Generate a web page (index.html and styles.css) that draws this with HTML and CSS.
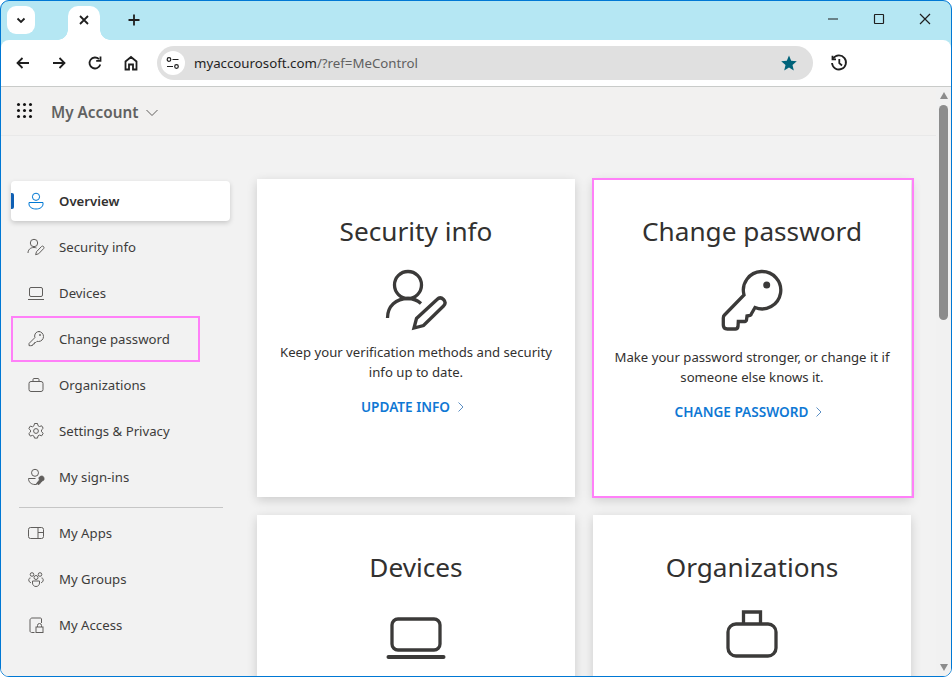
FILE: index.html
```html
<!DOCTYPE html>
<html lang="en">
<head>
<meta charset="utf-8">
<title>My Account</title>
<link rel="stylesheet" href="styles.css">
</head>
<body>
<div class="window">
  <div class="tabstrip">
    <button class="tab-search"><svg width="12" height="12" viewBox="0 0 12 12"><path d="M2.500 4.500 6 8l3.500-3.500" class="s2"/></svg></button>
    <div class="tab"><svg width="12" height="12" viewBox="0 0 12 12"><path d="M2 2l8 8M10 2l-8 8" class="s2"/></svg></div>
    <div class="newtab"><svg width="14" height="14" viewBox="0 0 14 14"><path d="M7 1.500v11M1.500 7h11" class="s2"/></svg></div>
    <div class="wincontrols">
      <svg width="12" height="12" viewBox="0 0 12 12"><path d="M1 6h10" class="s1"/></svg>
      <svg width="12" height="12" viewBox="0 0 12 12"><rect x="1.500" y="1.500" width="9" height="9" rx="0.500" class="s1"/></svg>
      <svg width="12" height="12" viewBox="0 0 12 12"><path d="M1 1l10 10M11 1 1 11" class="s1"/></svg>
    </div>
  </div>
  <div class="toolbar">
    <svg class="navicon" width="16" height="16" viewBox="0 0 16 16"><path d="M14 8H2.500M7.500 3 2.500 8l5 5" class="s2"/></svg>
    <svg class="navicon" width="16" height="16" viewBox="0 0 16 16"><path d="M2 8h11.500M8.500 3l5 5-5 5" class="s2"/></svg>
    <svg class="navicon" width="16" height="16" viewBox="0 0 16 16"><path d="M13.300 9.500A5.500 5.500 0 1 1 12 4.200" class="s2"/><path d="M13.500 1.500v4.300H9.200" class="s2"/></svg>
    <svg class="navicon" width="16" height="16" viewBox="0 0 16 16"><path d="M2.500 14.500V6.500L8 2l5.500 4.500v8h-3.500V9.500H6v5z" class="s2"/></svg>
    <div class="omnibox">
      <span class="siteinfo"><svg width="14" height="14" viewBox="0 0 14 14"><circle cx="3" cy="3.500" r="1.800" class="s1"/><path d="M6.500 3.500h6M1 10.500h6" class="s1"/><circle cx="10.500" cy="10.500" r="1.800" class="s1"/></svg></span>
      <span class="url"><span class="host">myaccourosoft.com</span>/?ref=MeControl</span>
      <svg class="star" width="18" height="18" viewBox="0 0 18 18"><path d="M9 1.500l2.200 5.200 5.600.5-4.300 3.700 1.300 5.500L9 13.600l-4.800 2.900 1.300-5.500L1.200 7.200l5.600-.5z" fill="#00637a"/></svg>
    </div>
    <svg class="history" width="18" height="18" viewBox="0 0 18 18"><path d="M3.200 4.500A7 7 0 1 1 2 9" class="s2"/><path d="M2.500 1.800v3.500H6M9.300 5v4.200l2.700 2.300" class="s2"/></svg>
  </div>
  <div class="viewport">
    <div class="page">
      <header class="topbar">
        <div class="waffle"><i></i><i></i><i></i><i></i><i></i><i></i><i></i><i></i><i></i></div>
        <span class="brand">My Account</span>
        <svg class="brandchev" width="14" height="8" viewBox="0 0 14 8"><path d="M1.500 1 7 6.500 12.500 1" class="s1 grey"/></svg>
      </header>
      <div class="content">
        <nav class="sidebar">
          <a class="navitem active"><span class="navico"><svg width="18" height="18" viewBox="0 0 18 18"><circle cx="9" cy="4.800" r="3.600"/><path d="M2 10.500h14v1.500c0 3-3 5-7 5s-7-2-7-5z"/></svg></span>Overview</a>
          <a class="navitem"><span class="navico"><svg width="18" height="18" viewBox="0 0 18 18"><circle cx="7" cy="5" r="3.700"/><path d="M1 15c0-3 2-5.500 6-5.500 1 0 1.800.2 2.500.5"/><path d="M16.500 8.500c-.6-.6-1.400-.6-2 0l-5 5.200-.9 3 3-.9 5-5.200c.5-.6.500-1.500-.1-2.100z"/></svg></span>Security info</a>
          <a class="navitem"><span class="navico"><svg width="18" height="18" viewBox="0 0 18 18"><rect x="2.500" y="3.500" width="13" height="9" rx="1.500"/><path d="M1 15.500h16"/></svg></span>Devices</a>
          <a class="navitem marked"><span class="navico"><svg width="18" height="18" viewBox="0 0 18 18"><path d="M11.500 1.500a5 5 0 0 1 0 10c-.5 0-1-.1-1.500-.2l-1.200 1.200-1.300.1-.1 1.300-1.300.1-.6 1.500-2 .2-1.500-.1.100-2.200 5.800-5.800c-.2-.5-.3-1-.3-1.600a5 5 0 0 1 4.900-4.500z"/><circle cx="13" cy="5" r=".9" class="dot"/></svg></span>Change password</a>
          <a class="navitem"><span class="navico"><svg width="18" height="18" viewBox="0 0 18 18"><rect x="2" y="5.500" width="14" height="10" rx="2"/><path d="M6 5.500V3.500c0-.5.300-1 1-1h4c.7 0 1 .5 1 1v2"/></svg></span>Organizations</a>
          <a class="navitem"><span class="navico"><svg width="18" height="18" viewBox="0 0 18 18"><path d="M7.500 1.500h3l.5 2.200 1.500.8 2.200-.7 1.500 2.500-1.700 1.600v1.800l1.700 1.600-1.500 2.500-2.200-.7-1.500.8-.5 2.200h-3L7 14.200l-1.500-.8-2.200.7-1.500-2.500 1.700-1.600V8.200L1.800 6.600l1.500-2.500 2.200.7L7 3.700z"/><circle cx="9" cy="9" r="2.400"/></svg></span>Settings &amp; Privacy</a>
          <a class="navitem"><span class="navico"><svg width="18" height="18" viewBox="0 0 18 18"><circle cx="8" cy="4.800" r="3.500"/><path d="M1.500 10.500h7M1.500 10.500c0 3.500 2.500 6 6.500 6 .8 0 1.500-.1 2-.3"/><path d="M9.500 15.500l3-3.500a2.500 2.500 0 1 1 2.500 1l-3 3.500z" class="solid"/></svg></span>My sign-ins</a>
          <hr class="navdivider">
          <a class="navitem"><span class="navico"><svg width="18" height="18" viewBox="0 0 18 18"><rect x="1.500" y="3.500" width="15" height="11" rx="2"/><path d="M11 3.500v11M11 8.500h5.500"/></svg></span>My Apps</a>
          <a class="navitem"><span class="navico"><svg width="18" height="18" viewBox="0 0 18 18"><circle cx="5" cy="4.500" r="1.800"/><circle cx="13" cy="4.500" r="1.800"/><circle cx="9" cy="7.500" r="2"/><path d="M5.500 11h7v2c0 2-1.500 3.500-3.500 3.500S5.500 15 5.500 13z"/><path d="M3.500 8C2 8 1.800 9 1.800 10c0 1.500 1 2.500 2.200 2.700M14.500 8c1.500 0 1.700 1 1.700 2 0 1.500-1 2.500-2.200 2.700"/></svg></span>My Groups</a>
          <a class="navitem"><span class="navico"><svg width="18" height="18" viewBox="0 0 18 18"><path d="M7.500 16.500H4.500c-.7 0-1.500-.7-1.500-1.500V4c0-1 1-2 2-2h8.500c.5 0 1 .5 1 1v4"/><rect x="9" y="11" width="7" height="5.500"/><path d="M10.500 11V9.500a2 2 0 0 1 4 0V11"/></svg></span>My Access</a>
        </nav>
        <main class="cards">
          <section class="card">
            <h2>Security info</h2>
            <svg class="bigicon" width="64" height="64" viewBox="0 0 64 64"><circle cx="24" cy="17" r="13.500"/><path d="M3.500 50C3.500 38 12 30.500 24 30.500c5 0 9 1.500 13 5"/><path d="M30 60l2.500-9.500L53 31.500c2-2 4.500-2 6.500 0s2 4.500 0 6.500L39.500 57.500z"/></svg>
            <p>Keep your verification methods and security info up to date.</p>
            <a class="cardlink">UPDATE INFO<svg width="8" height="12" viewBox="0 0 8 12"><path d="M1.500 1.500 6 6l-4.500 4.500"/></svg></a>
          </section>
          <section class="card marked-card">
            <h2>Change password</h2>
            <svg class="bigicon tall" width="64" height="64" viewBox="0 0 64 64"><path d="M35 39.500A18.700 18.700 0 1 0 24 27L4.500 47c-.8.8-1.200 2-1.200 3v7c0 2.500 1.700 4 4 4h8c2 0 2.500-1 2.700-2.500l.3-5h6.500c1 0 1.500-.5 1.700-1.500l.5-4 3-.5c.8-.3 1.200-.8 1.300-1.500z"/><circle cx="46.700" cy="17" r="3.500" class="dot"/></svg>
            <p>Make your password stronger, or change it if someone else knows it.</p>
            <a class="cardlink">CHANGE PASSWORD<svg width="8" height="12" viewBox="0 0 8 12"><path d="M1.500 1.500 6 6l-4.500 4.500"/></svg></a>
          </section>
          <section class="card">
            <h2>Devices</h2>
            <svg class="bigicon" width="64" height="64" viewBox="0 0 64 64"><rect x="8" y="15" width="48" height="31" rx="6"/><path d="M4.500 53h55" class="thick"/></svg>
          </section>
          <section class="card">
            <h2>Organizations</h2>
            <svg class="bigicon" width="64" height="64" viewBox="0 0 64 64"><rect x="8" y="20" width="48" height="32" rx="8"/><path d="M23.500 20V8h17v12"/></svg>
          </section>
        </main>
      </div>
    </div>
    <div class="scrollbar">
      <span class="arrow up"></span>
      <span class="thumb"></span>
      <span class="arrow down"></span>
    </div>
  </div>
</div>
</body>
</html>
```

FILE: styles.css
```css
*, *::before, *::after { box-sizing: border-box; }
html, body { margin: 0; padding: 0; height: 100%; overflow: hidden; background: #fff; }
body { font-family: "Noto Sans", "Open Sans", sans-serif; color: #323130; }
svg { display: block; flex: none; }
.s1, .s2 { fill: none; stroke: #1f1f1f; }
.s1 { stroke-width: 1.200; }
.s2 { stroke-width: 1.800; }
.grey { stroke: #605e5c; stroke-width: 1; }

.window {
  width: 952px; height: 677px; display: flex; flex-direction: column;
  border: 1px solid #0078d4; border-radius: 9px; overflow: hidden; background: #b5e7f3;
}
.tabstrip { height: 39px; flex: none; display: flex; align-items: flex-start; position: relative; }
.tab-search {
  width: 28px; height: 28px; margin: 5px 0 0 6px; padding: 0; border: 0; background: #fff;
  border-radius: 9px; display: flex; align-items: center; justify-content: center;
}
.tab {
  width: 32px; height: 34px; margin: 5px 0 0 33px; background: #fff; border-radius: 10px 10px 0 0;
  display: flex; align-items: center; justify-content: center; padding-bottom: 6px; position: relative;
}
.tab::before, .tab::after {
  content: ""; position: absolute; bottom: 0; width: 10px; height: 10px;
}
.tab::before { left: -10px; background: radial-gradient(circle at 0 0, transparent 9.500px, #fff 10px); }
.tab::after { right: -10px; background: radial-gradient(circle at 100% 0, transparent 9.500px, #fff 10px); }
.newtab { margin: 6px 0 0 27px; width: 14px; height: 26px; display: flex; align-items: center; }
.wincontrols { margin-left: auto; margin-top: 12px; margin-right: 20px; display: flex; gap: 34px; }

.toolbar {
  height: 47px; flex: none; background: #fff; border-radius: 8px 8px 0 0; border-bottom: 1px solid #c9cbc9;
  display: flex; align-items: center; padding: 0 0 1px 14px;
}
.navicon { margin-right: 20px; }
.omnibox {
  width: 656px; height: 34px; margin-left: -2px; border-radius: 17px; background: #e0e0e0;
  display: flex; align-items: center; padding-left: 4px; padding-right: 15px;
}
.siteinfo { width: 24px; height: 24px; border-radius: 50%; background: #fff; display: flex; align-items: center; justify-content: center; }
.url { margin-left: 9px; font-size: 13.270px; color: #616161; flex: 1; white-space: nowrap; }
.host { color: #1f1f1f; }
.history { margin-left: 17px; }

.viewport { flex: 1; min-height: 0; display: flex; background: #f2f2f2; }
.page { flex: 1; min-width: 0; overflow: hidden; background: #f2f2f2; }
.topbar {
  height: 49px; background: #f2f1f0; border-bottom: 1px solid #e9e9e9; display: flex; align-items: center; padding: 0 0 0 16px;
}
.waffle { display: grid; grid-template-columns: repeat(3, 3px); gap: 3px; width: 15px; margin-top: -2px; }
.waffle i { width: 3px; height: 3px; border-radius: 50%; background: #111; }
.brand { margin-left: 19px; margin-top: 2px; font-size: 15.300px; font-weight: 600; color: #616161; }
.brandchev { margin-left: 7px; margin-top: 4px; }

.content { display: flex; align-items: flex-start; padding: 43px 0 0 10px; }
.sidebar { width: 219px; flex: none; padding-top: 2px; display: flex; flex-direction: column; }
.navitem {
  height: 46px; display: flex; align-items: center; font-size: 13.200px; color: #3d3c3b; padding-left: 16px; position: relative; width: 100%;
}
.navico { width: 18px; height: 18px; margin-right: 14px; }
.navico svg { fill: none; stroke: #605e5c; stroke-width: 1; }
.navico .dot { fill: #605e5c; stroke: none; }
.navico .solid { fill: #605e5c; }
.navitem.active {
  height: 40px; margin-bottom: 3px; background: #fff; border-radius: 4px; font-weight: 600; color: #323130;
  box-shadow: 0 2px 5px rgba(0,0,0,.18);
}
.navitem.active::before { content: ""; position: absolute; left: 0; top: 12px; width: 3px; height: 16px; background: #0f5fb3; border-radius: 0 2px 2px 0; }
.navitem.active .navico svg { stroke: #0078d4; }
.navitem.marked::after {
  content: ""; position: absolute; left: 0; top: 0; width: 189px; height: 46px; border: 2px solid #ff80f8;
}
.navdivider { width: 204px; height: 1px; border: 0; background: #c6c6c6; margin: 7px 0 2px 8px; }

.cards { margin-left: 27px; display: grid; grid-template-columns: 318px 318px; gap: 18px; }
.card {
  height: 318px; background: #fff; box-shadow: 0 3px 10px rgba(0,0,0,.16);
  display: flex; flex-direction: column; align-items: center; padding: 33px 20px 0; position: relative;
}
.card h2 { margin: 0; font-size: 26.200px; line-height: 38px; font-weight: 400; color: #323130; }
.bigicon { margin-top: 18px; fill: none; stroke: #3b3a39; stroke-width: 3.300; }
.bigicon .dot { fill: #3b3a39; stroke: none; }
.bigicon .thick { stroke-width: 4; stroke-linecap: round; }
.bigicon.tall { margin-bottom: 5px; }
.card p { margin: 10px 0 0; font-size: 13.150px; line-height: 20px; text-align: center; color: #323130; width: 290px; }
.cardlink { margin-top: 15px; display: flex; align-items: center; gap: 7px; padding-right: 6px; font-size: 13.600px; font-weight: 600; color: #0f78d4; }
.cardlink svg { fill: none; stroke: #5c8fc4; stroke-width: 1; }
.marked-card::after { content: ""; position: absolute; left: -1px; top: -1px; width: 322px; height: 320px; border: 2px solid #ff80f8; }

.scrollbar { width: 15px; flex: none; background: #f1f1f1; position: relative; display: flex; flex-direction: column; align-items: center; padding-top: 5px; }
.arrow { width: 0; height: 0; border-left: 4.500px solid transparent; border-right: 4.500px solid transparent; }
.arrow.up { border-bottom: 7px solid #8c8c8c; }
.arrow.down { border-top: 7px solid #8c8c8c; position: absolute; bottom: 5px; }
.thumb { width: 9px; height: 215px; margin-top: 6px; border-radius: 5px; background: #8c8c8c; }
```
